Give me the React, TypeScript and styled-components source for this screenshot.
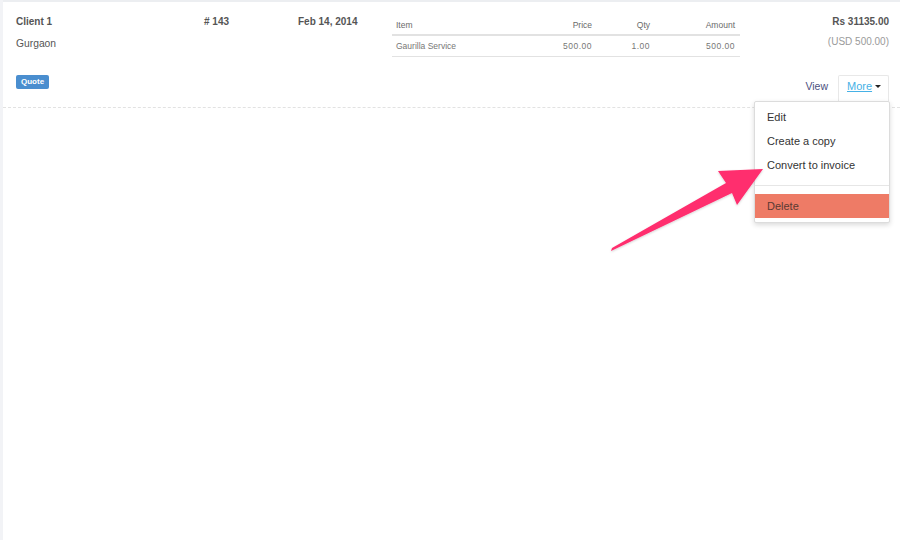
import React from "react";
import styled, { createGlobalStyle } from "styled-components";

const Global = createGlobalStyle`
  html, body { margin: 0; padding: 0; background: #fff; }
  body { font-family: "Liberation Sans", Arial, sans-serif; color: #555; }
  * { box-sizing: border-box; }
`;

const Page = styled.div`
  display: flex;
  width: 900px;
  height: 540px;
  position: relative;
  overflow: hidden;
  background: #fff;
`;

const Strip = styled.div`
  width: 3px;
  flex: none;
  background: #f2f3f6;
`;

const Main = styled.div`
  flex: 1;
  border-top: 2px solid #eceef1;
`;

const Record = styled.div`
  border-bottom: 1px dashed #e2e2e2;
  padding: 12px 11px 0 13px;
  height: 106px;
`;

const TopRow = styled.div`
  display: grid;
  grid-template-columns: 188px 94px 94px 348px 1fr;
  align-items: start;
`;

const Cell = styled.div`
  line-height: 14px;
  padding-top: 1px;
`;

const Strong = styled.div<{ $right?: boolean }>`
  font-weight: bold;
  color: #555;
  font-size: 10px;
  line-height: 14px;
  text-align: ${(p) => (p.$right ? "right" : "left")};
`;

const Sub = styled.div<{ $right?: boolean; $muted?: boolean }>`
  margin-top: ${(p) => (p.$muted ? "6px" : "8px")};
  font-size: ${(p) => (p.$muted ? "10px" : "10.3px")};
  line-height: 14px;
  color: ${(p) => (p.$muted ? "#9a9a9a" : "#555")};
  text-align: ${(p) => (p.$right ? "right" : "left")};
`;

const Table = styled.table`
  width: 348px;
  margin-top: 1px;
  border-collapse: collapse;
  table-layout: fixed;
  font-size: 8.5px;
  color: #777;
`;

const Th = styled.th<{ $w: number; $right?: boolean }>`
  width: ${(p) => p.$w}px;
  height: 20px;
  padding: 1px ${(p) => (p.$right ? 5 : 0)}px 0 ${(p) => (p.$right ? 0 : 4)}px;
  font-weight: normal;
  text-align: ${(p) => (p.$right ? "right" : "left")};
  border-bottom: 2px solid #e2e2e2;
  color: #6a6a6a;
  vertical-align: middle;
`;

const Td = styled.td<{ $right?: boolean }>`
  height: 21px;
  padding: 1px ${(p) => (p.$right ? 5 : 0)}px 0 ${(p) => (p.$right ? 0 : 4)}px;
  text-align: ${(p) => (p.$right ? "right" : "left")};
  border-bottom: 1px solid #e2e2e2;
  color: #777;
  letter-spacing: ${(p) => (p.$right ? "0.5px" : "0")};
`;

const BottomRow = styled.div`
  display: flex;
  justify-content: space-between;
  align-items: flex-start;
  margin-top: 18px;
`;

const Badge = styled.span`
  display: inline-block;
  background: #4a8ecf;
  color: #fff;
  font-size: 8px;
  font-weight: bold;
  height: 14px;
  line-height: 14px;
  padding: 0 5px;
  border-radius: 2px;
`;

const Actions = styled.div`
  position: relative;
  display: flex;
  align-items: flex-start;
`;

const ViewLink = styled.span`
  font-size: 10.5px;
  line-height: 14px;
  color: #4b5080;
  margin-top: 4px;
  margin-right: 10px;
`;

const MoreTab = styled.div`
  width: 51px;
  height: 26px;
  border: 1px solid #e8e8e8;
  border-bottom: none;
  border-radius: 2px 2px 0 0;
  padding: 0 0 4px 8px;
  font-size: 11px;
  line-height: 14px;
  display: flex;
  align-items: center;
  gap: 3px;
`;

const MoreText = styled.span`
  color: #46b1e6;
  text-decoration: underline;
`;

const Caret = styled.span`
  width: 0;
  height: 0;
  border-left: 3px solid transparent;
  border-right: 3px solid transparent;
  border-top: 3px solid #222;
`;

const Menu = styled.div`
  position: absolute;
  top: 26px;
  right: -1px;
  width: 136px;
  background: #fff;
  border: 1px solid #dcdcdc;
  border-radius: 2px;
  box-shadow: 0 2px 5px rgba(0, 0, 0, 0.15);
  padding: 3px 0 4px;
  z-index: 5;
`;

const MenuItem = styled.div<{ $danger?: boolean }>`
  height: 24px;
  line-height: 24px;
  padding-left: 12px;
  font-size: 11px;
  color: ${(p) => (p.$danger ? "#5a3a33" : "#333")};
  background: ${(p) => (p.$danger ? "#ee7b66" : "transparent")};
`;

const Divider = styled.div`
  height: 1px;
  background: #e6e6e6;
  margin: 8px 0;
`;

const Arrow = styled.svg`
  position: absolute;
  left: 0;
  top: 0;
  pointer-events: none;
  z-index: 10;
`;

export default function App() {
  return (
    <>
      <Global />
      <Page>
        <Strip />
        <Main>
          <Record>
            <TopRow>
              <Cell>
                <Strong>Client 1</Strong>
                <Sub>Gurgaon</Sub>
              </Cell>
              <Cell>
                <Strong># 143</Strong>
              </Cell>
              <Cell>
                <Strong>Feb 14, 2014</Strong>
              </Cell>
              <div>
                <Table>
                  <thead>
                    <tr>
                      <Th $w={128}>Item</Th>
                      <Th $w={77} $right>Price</Th>
                      <Th $w={58} $right>Qty</Th>
                      <Th $w={85} $right>Amount</Th>
                    </tr>
                  </thead>
                  <tbody>
                    <tr>
                      <Td>Gaurilla Service</Td>
                      <Td $right>500.00</Td>
                      <Td $right>1.00</Td>
                      <Td $right>500.00</Td>
                    </tr>
                  </tbody>
                </Table>
              </div>
              <Cell>
                <Strong $right>Rs 31135.00</Strong>
                <Sub $right $muted>(USD 500.00)</Sub>
              </Cell>
            </TopRow>
            <BottomRow>
              <Badge>Quote</Badge>
              <Actions>
                <ViewLink>View</ViewLink>
                <MoreTab>
                  <MoreText>More</MoreText>
                  <Caret />
                </MoreTab>
                <Menu>
                  <MenuItem>Edit</MenuItem>
                  <MenuItem>Create a copy</MenuItem>
                  <MenuItem>Convert to invoice</MenuItem>
                  <Divider />
                  <MenuItem $danger>Delete</MenuItem>
                </Menu>
              </Actions>
            </BottomRow>
          </Record>
        </Main>
        <Arrow width="900" height="540" viewBox="0 0 900 540">
          <defs>
            <filter id="sh" x="-10%" y="-10%" width="120%" height="120%">
              <feDropShadow dx="0" dy="1" stdDeviation="1" floodColor="#000" floodOpacity="0.18" />
            </filter>
          </defs>
          <path
            d="M611 251 L612 248 L726 183 L718 171 L763 169 L737 205 L732 193 Z"
            fill="#ff2d6e"
            filter="url(#sh)"
          />
        </Arrow>
      </Page>
    </>
  );
}
